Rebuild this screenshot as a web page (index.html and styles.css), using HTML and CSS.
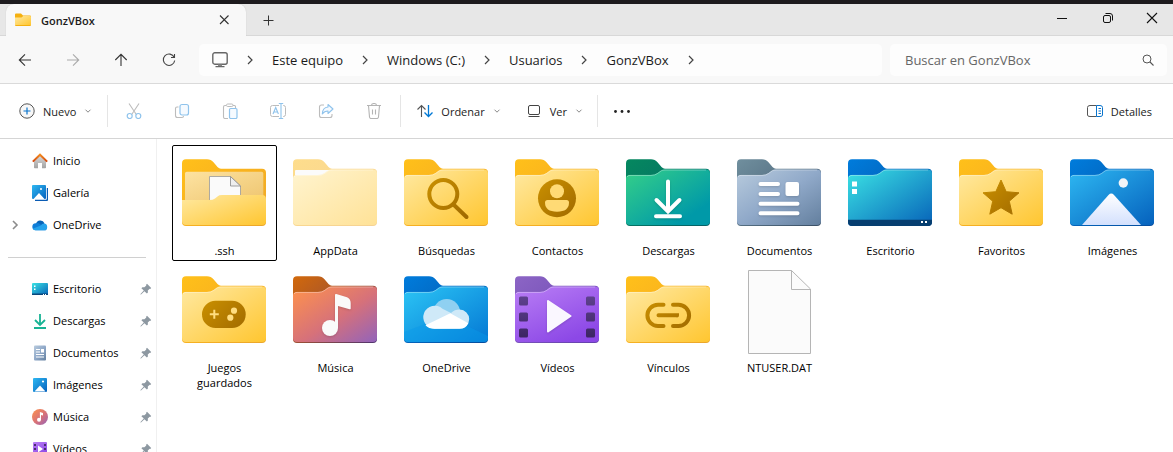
FILE: index.html
```html
<!DOCTYPE html>
<html lang="es">
<head>
<meta charset="utf-8">
<meta name="viewport" content="width=device-width, initial-scale=1">
<title>GonzVBox</title>
<link rel="stylesheet" href="styles.css">
</head>
<body>
<svg class="defs" aria-hidden="true">
  <defs>
    <linearGradient id="y-back" x1="0" y1="0" x2="1" y2="1"><stop offset="0" stop-color="#ffc01a"/><stop offset=".4" stop-color="#fab41e"/><stop offset="1" stop-color="#eba62b"/></linearGradient>
    <linearGradient id="y-front" x1="0" y1="0" x2="1" y2="1"><stop offset="0" stop-color="#ffe9a2"/><stop offset="1" stop-color="#ffc630"/></linearGradient>
    <linearGradient id="y-inner" x1="0" y1="0" x2="1" y2="1"><stop offset="0" stop-color="#fde3a2"/><stop offset="1" stop-color="#eec46e"/></linearGradient>
    <linearGradient id="p-back" x1="0" y1="0" x2="1" y2="1"><stop offset="0" stop-color="#fedd8c"/><stop offset="1" stop-color="#f5d294"/></linearGradient>
    <linearGradient id="p-front" x1="0" y1="0" x2="1" y2="1"><stop offset="0" stop-color="#fff4d0"/><stop offset="1" stop-color="#ffe297"/></linearGradient>
    <linearGradient id="g-back" x1="0" y1="0" x2="1" y2="1"><stop offset="0" stop-color="#05885f"/><stop offset="1" stop-color="#066067"/></linearGradient>
    <linearGradient id="g-front" x1="0" y1="0" x2="1" y2="1"><stop offset="0" stop-color="#35d088"/><stop offset=".8" stop-color="#0099a8"/></linearGradient>
    <linearGradient id="s-back" x1="0" y1="0" x2="1" y2="1"><stop offset="0" stop-color="#708f9e"/><stop offset="1" stop-color="#3a4f66"/></linearGradient>
    <linearGradient id="s-front" x1="0" y1="0" x2="1" y2="1"><stop offset="0" stop-color="#b8cbdd"/><stop offset=".5" stop-color="#90a9c9"/><stop offset="1" stop-color="#637f9e"/></linearGradient>
    <linearGradient id="b-back" x1="0" y1="0" x2="1" y2="1"><stop offset="0" stop-color="#007cdc"/><stop offset="1" stop-color="#064c9c"/></linearGradient>
    <linearGradient id="b-front" x1="0" y1="0" x2="1" y2="1"><stop offset="0" stop-color="#2eb8f2"/><stop offset="1" stop-color="#0561bd"/></linearGradient>
    <linearGradient id="d-front" x1="0" y1="0" x2="1" y2="1"><stop offset="0" stop-color="#3be3e4"/><stop offset="1" stop-color="#0763b9"/></linearGradient>
    <linearGradient id="c-front" x1="0" y1="0" x2="1" y2="1"><stop offset="0" stop-color="#2cc5f5"/><stop offset="1" stop-color="#0478d4"/></linearGradient>
    <linearGradient id="m-back" x1="0" y1="0" x2="1" y2="1"><stop offset="0" stop-color="#d2690b"/><stop offset=".5" stop-color="#9f5132"/><stop offset="1" stop-color="#4f3471"/></linearGradient>
    <linearGradient id="m-front" x1="0" y1="0" x2="1" y2="1"><stop offset="0" stop-color="#ff934b"/><stop offset=".55" stop-color="#d6717a"/><stop offset="1" stop-color="#9263bb"/></linearGradient>
    <linearGradient id="v-back" x1="0" y1="0" x2="1" y2="1"><stop offset="0" stop-color="#8c65c5"/><stop offset="1" stop-color="#6440ad"/></linearGradient>
    <linearGradient id="v-front" x1="0" y1="0" x2=".6" y2="1"><stop offset="0" stop-color="#b97ef5"/><stop offset="1" stop-color="#8c48e6"/></linearGradient>
    <linearGradient id="ochre" gradientUnits="userSpaceOnUse" x1="24" y1="26" x2="62" y2="64"><stop offset="0" stop-color="#ca9000"/><stop offset="1" stop-color="#a06a00"/></linearGradient>
    <linearGradient id="snow" x1="0" y1="0" x2="0" y2="1"><stop offset="0" stop-color="#fff"/><stop offset="1" stop-color="#d3e0fd"/></linearGradient>
    <linearGradient id="reel" gradientUnits="userSpaceOnUse" x1="0" y1="26" x2="0" y2="68"><stop offset="0" stop-color="#5f428f"/><stop offset="1" stop-color="#3c2463"/></linearGradient>
    <linearGradient id="roof" x1="0" y1="0" x2="0" y2="1"><stop offset="0" stop-color="#f28a1e"/><stop offset="1" stop-color="#d4480f"/></linearGradient>
    <linearGradient id="wall" x1="0" y1="0" x2="0" y2="1"><stop offset="0" stop-color="#d8d8d8"/><stop offset="1" stop-color="#a3a3a3"/></linearGradient>
    <path id="back" d="M0 10.300q0-4 4-4h21q4 0 6.500 3l4 4.800q1.600 1.600 3.500 1.600h41q4 0 4 4V69q0 4-4 4H4q-4 0-4-4z"/>
    <path id="front" d="M0 25.500q0-3.500 3.500-3.500H25q3.800 0 6.500-2l3.500-2.500q1.500-1 4-1h41q4 0 4 4V68q0 4-4 4H4q-4 0-4-4z"/>
    <path id="rim" d="M1 24q.8-1.600 3-1.600h21q4 0 6.700-2l3.400-2.500q1.500-.9 4-.9h41" fill="none" stroke="#fff" stroke-opacity=".35"/>
    <g id="yellow"><use href="#back" fill="url(#y-back)"/><use href="#front" fill="url(#y-front)"/><use href="#rim"/></g>
    <symbol id="pin" viewBox="0 0 12 12"><path fill="#8d98a1" d="M7 .8 11.200 5l-.9.900-.6-.2-1.900 1.900.1 2-1 1L4.400 8.200 1 11.500H.5V11l3.300-3.400L1.400 5.200l1-1 2 .1 1.900-1.900-.2-.7z"/></symbol>
    <symbol id="crumb" viewBox="0 0 8 10"><path d="m2 1 4 4-4 4" fill="none" stroke="#444" stroke-width="1.200"/></symbol>
    <symbol id="down" viewBox="0 0 8 8"><path d="m1.500 2.700 2.500 2.500 2.500-2.500" fill="none" stroke="#888"/></symbol>
  </defs>
</svg>

<div class="window">
  <header class="titlebar">
    <div class="tab">
      <svg class="icon" viewBox="0 0 16 16"><path fill="#f5b00f" d="M0 2.500q0-1 1-1h5l2 2h7q1 0 1 1V13q0 1-1 1H1q-1 0-1-1z"/><path fill="url(#y-front)" d="M0 5.500h6.500L8.300 4H15q1 0 1 1v8H0z"/></svg>
      <span class="tab-title">GonzVBox</span>
      <button class="plain" aria-label="Cerrar pestaña"><svg class="icon" viewBox="0 0 16 16"><path d="m4 3.500 8.500 8.500m0-8.500L4 12" stroke="#333" stroke-width="1.100"/></svg></button>
    </div>
    <button class="plain new-tab" aria-label="Nueva pestaña"><svg class="icon" viewBox="0 0 16 16"><path d="M8.500 3.500v10M3.500 8.500h10" stroke="#333"/></svg></button>
    <div class="controls">
      <button class="plain" aria-label="Minimizar"><svg class="icon" viewBox="0 0 16 16"><path d="M3 8.500h10" stroke="#111"/></svg></button>
      <button class="plain" aria-label="Restaurar"><svg class="icon" viewBox="0 0 16 16" fill="none" stroke="#111"><rect x="3.500" y="5.500" width="7" height="7" rx="1.500"/><path d="M5.500 3.500H10q2.500 0 2.500 2.500v4.500"/></svg></button>
      <button class="plain" aria-label="Cerrar"><svg class="icon" viewBox="0 0 16 16"><path d="m3 3 10 10M13 3 3 13" stroke="#111" stroke-width="1.100"/></svg></button>
    </div>
  </header>

  <div class="navbar">
    <div class="history">
      <button class="plain" aria-label="Atrás"><svg class="icon" viewBox="0 0 16 16"><path d="M14 8H2.500M8 2.300 2.300 8 8 13.700" fill="none" stroke="#333" stroke-width="1.100"/></svg></button>
      <button class="plain" aria-label="Adelante" disabled><svg class="icon" viewBox="0 0 16 16"><path d="M2 8h11.500M8 2.300 13.700 8 8 13.700" fill="none" stroke="#aaa" stroke-width="1.100"/></svg></button>
      <button class="plain" aria-label="Subir"><svg class="icon" viewBox="0 0 16 16"><path d="M8 14V2.500M2.300 8 8 2.300 13.700 8" fill="none" stroke="#333" stroke-width="1.100"/></svg></button>
      <button class="plain" aria-label="Actualizar"><svg class="icon" viewBox="0 0 16 16"><path d="M13.200 5.300A5.700 5.700 0 1 0 13.700 8.500M13.500 2v3.500H10" fill="none" stroke="#444" stroke-width="1.100"/></svg></button>
    </div>
    <nav class="address" aria-label="Ruta">
      <svg class="icon" viewBox="0 0 16 16"><rect x=".8" y=".8" width="14.400" height="11.400" rx="2" fill="none" stroke="#666" stroke-width="1.400"/><path d="M6 12.500h4v2H6z" fill="#888"/><path d="M3.500 14.600h9" stroke="#666" stroke-width="1.200"/></svg>
      <svg class="crumb"><use href="#crumb"/></svg>
      <a href="#">Este equipo</a>
      <svg class="crumb"><use href="#crumb"/></svg>
      <a href="#">Windows (C:)</a>
      <svg class="crumb"><use href="#crumb"/></svg>
      <a href="#">Usuarios</a>
      <svg class="crumb"><use href="#crumb"/></svg>
      <a href="#">GonzVBox</a>
      <svg class="crumb"><use href="#crumb"/></svg>
    </nav>
    <label class="search">
      <input type="search" placeholder="Buscar en GonzVBox" aria-label="Buscar en GonzVBox">
      <svg class="icon" viewBox="0 0 16 16"><circle cx="7" cy="7" r="4" fill="none" stroke="#555"/><path d="m10 10 3.500 3.500" stroke="#555" stroke-width="1.100"/></svg>
    </label>
  </div>

  <div class="toolbar">
    <button class="command"><svg class="icon" viewBox="0 0 16 16"><circle cx="8" cy="8" r="7.200" fill="#f7f7f7" stroke="#555"/><path d="M8 4.500v7M4.500 8h7" stroke="#0a74cc" stroke-width="1.200"/></svg><span>Nuevo</span><svg class="down"><use href="#down"/></svg></button>
    <div class="edit">
      <button class="plain" aria-label="Cortar" disabled><svg class="icon" viewBox="0 0 16 16" fill="none"><path d="m3 .5 7.300 11M13 .5l-7.300 11" stroke="#bcbcbc" stroke-width="1.100"/><circle cx="3.700" cy="13" r="2.500" stroke="#8fc3ec" stroke-width="1.200"/><circle cx="12.300" cy="13" r="2.500" stroke="#8fc3ec" stroke-width="1.200"/></svg></button>
      <button class="plain" aria-label="Copiar" disabled><svg class="icon" viewBox="0 0 16 16" fill="none"><path d="M4.500 4H3Q1.500 4 1.500 5.500v7q0 2 2 2H8q1.500 0 1.500-1.500" stroke="#bcbcbc" stroke-width="1.100"/><rect x="6" y="1.500" width="8.500" height="10.500" rx="2" fill="#f5faff" stroke="#8fc3ec" stroke-width="1.200"/></svg></button>
      <button class="plain" aria-label="Pegar" disabled><svg class="icon" viewBox="0 0 16 16" fill="none"><path d="M4 2.500H3Q1.500 2.500 1.500 4v10q0 1.500 1.500 1.500h3M11 2.500h1.500q1 0 1 1V5" stroke="#bcbcbc" stroke-width="1.100"/><rect x="4.500" y="1" width="6.500" height="2.500" rx="1.200" stroke="#bcbcbc"/><rect x="7.500" y="5.500" width="7.500" height="10" rx="1.200" fill="#f5faff" stroke="#8fc3ec" stroke-width="1.200"/></svg></button>
      <button class="plain" aria-label="Cambiar nombre" disabled><svg class="icon" viewBox="0 0 16 16" fill="none"><path d="M9 2.500H2.500q-2 0-2 2v7q0 2 2 2H9m4-11h.5q2 0 2 2v7q0 2-2 2H13" stroke="#bcbcbc"/><path d="m3 11 2.700-6.500L8.400 11M4 9h3.500M8.800.5h4.400m-4.400 15h4.400M11 .5v15" stroke="#8fc3ec" stroke-width="1.100"/></svg></button>
      <button class="plain" aria-label="Compartir" disabled><svg class="icon" viewBox="0 0 16 16" fill="none"><path d="M6 2H3.500q-2 0-2 2v8.500q0 2 2 2H12q2 0 2-2V11" stroke="#bcbcbc" stroke-width="1.100"/><path d="M10 1.500 15 6l-5 4.500V8q-3.700 0-5.700 3Q4.500 4.500 10 4z" fill="#f5faff" stroke="#8fc3ec" stroke-width="1.100" stroke-linejoin="round"/></svg></button>
      <button class="plain" aria-label="Eliminar" disabled><svg class="icon" viewBox="0 0 16 16" fill="none"><path d="M1 2.500h14M2.500 2.500l1 11.500q.2 1.500 1.500 1.500h6q1.300 0 1.500-1.500l1-11.500M5.500 2.500q0-2 2.500-2t2.500 2M6.500 6.500v5m3-5v5" stroke="#b4b4b4" stroke-width="1.100"/></svg></button>
    </div>
    <div class="arrange">
      <button class="command"><svg class="icon" viewBox="0 0 16 16" fill="none"><path d="M4.500 14V2.500M.5 6.500l4-4 4 4" stroke="#555" stroke-width="1.100"/><path d="M11.500 2v11.500m-4-4 4 4 4-4" stroke="#0078d4" stroke-width="1.300"/></svg><span>Ordenar</span><svg class="down"><use href="#down"/></svg></button>
      <button class="command"><svg class="icon" viewBox="0 0 16 16" fill="none" stroke="#444"><rect x="2.500" y="2.500" width="11" height="9" rx="1.500"/><path d="M2.500 13.500h11"/></svg><span>Ver</span><svg class="down"><use href="#down"/></svg></button>
    </div>
    <button class="plain more" aria-label="Ver más"><svg class="icon" viewBox="0 0 16 16" fill="#222"><circle cx="1.500" cy="8.500" r="1.400"/><circle cx="8" cy="8.500" r="1.400"/><circle cx="14.500" cy="8.500" r="1.400"/></svg></button>
    <button class="command details"><svg class="icon" viewBox="0 0 16 16" fill="none"><path d="M9.500 2.500H3q-2.500 0-2.500 2v7.500q0 1.500 2.500 1.500h6.500" stroke="#555"/><path d="M9.500 2.500H13q2.500 0 2.500 2V12q0 1.500-2.500 1.500H9.500zM11.500 5.500h2.500M11.500 8h2.500M11.500 10.500h2.500" stroke="#0a74cc"/></svg><span>Detalles</span></button>
  </div>

  <div class="content">
    <nav class="sidebar" aria-label="Panel de navegación">
      <a href="#"><svg class="icon" viewBox="0 0 16 16"><path fill="url(#wall)" d="M2 8 8 2.500 14 8v6.500q0 .8-.8.800H10V10H6v5.300H2.800q-.8 0-.8-.8z"/><path d="M.8 8.600 8 1.700l7.200 6.900" fill="none" stroke="url(#roof)" stroke-width="2"/></svg><span>Inicio</span></a>
      <a href="#"><svg class="icon" viewBox="0 0 16 16"><path d="M3 15.500h11q1.500 0 1.500-1.500V3" fill="none" stroke="#0a5cb4" stroke-width="1.400"/><rect width="14" height="14" rx="1" fill="url(#b-front)"/><path d="M1.500 14 7 8l5.500 6z" fill="#fff"/><circle cx="9" cy="4" r="1" fill="#fff"/></svg><span>Galería</span></a>
      <a class="expandable" href="#"><svg class="crumb expand"><path d="m2 1 4 4-4 4" fill="none" stroke="#8c8c8c" stroke-width="1.600"/></svg><svg class="icon" viewBox="0 0 16 16"><path d="M4 7a4.500 4.500 0 0 1 8.500-.7L9.500 11z" fill="#0864b8"/><path d="M4.200 6.200q2-.4 4 1L15 11l-1 2.200H3.500A3.500 3.500 0 0 1 4.200 6.200z" fill="#0f7ed8"/><path d="M12 6.600a3.400 3.400 0 0 1 .6 6.700H3.500q-1.800 0-2.800-1.500l8-3.200q1.300-1.800 3.300-2z" fill="#25a3ec"/></svg><span>OneDrive</span></a>
      <hr>
      <a href="#"><svg class="icon" viewBox="0 0 16 16"><rect y="2" width="16" height="12" rx="1" fill="url(#d-front)"/><path d="M0 12.500h16V14H0z" fill="#0b467b"/><path d="M2 4.500h1.500V6H2zM2 7.500h1.500V9H2zM11 13h1v1h-1zM13 13h1v1h-1z" fill="#fff"/></svg><span>Escritorio</span><svg class="pin"><use href="#pin"/></svg></a>
      <a href="#"><svg class="icon" viewBox="0 0 16 16"><path d="M8 1v11M3 7l5 5 5-5M2 15h12" fill="none" stroke="#18b394" stroke-width="1.800"/></svg><span>Descargas</span><svg class="pin"><use href="#pin"/></svg></a>
      <a href="#"><svg class="icon" viewBox="0 0 16 16"><rect x="2" y=".5" width="12" height="15" rx="1" fill="url(#s-front)"/><path d="M4 4.500h4M4 7h4M4 9.500h8M4 12h8" stroke="#fff"/><path d="M9 4h3v3.500H9z" fill="#fff"/></svg><span>Documentos</span><svg class="pin"><use href="#pin"/></svg></a>
      <a href="#"><svg class="icon" viewBox="0 0 16 16"><rect x="1" y="1" width="14" height="14" rx="1" fill="url(#b-front)"/><path d="M2.500 14.500 8 8.500l5.500 6z" fill="#fff"/><circle cx="11" cy="4.500" r="1.100" fill="#fff"/></svg><span>Imágenes</span><svg class="pin"><use href="#pin"/></svg></a>
      <a href="#"><svg class="icon" viewBox="0 0 16 16"><circle cx="8" cy="8" r="8" fill="url(#m-front)"/><circle cx="7" cy="10.800" r="2" fill="#fff"/><path d="M7.900 3 11 4v2.500L9 6v5H7.900z" fill="#fff"/></svg><span>Música</span><svg class="pin"><use href="#pin"/></svg></a>
      <a href="#"><svg class="icon" viewBox="0 0 16 16"><rect x="1" y="1" width="14" height="14" rx="1" fill="url(#v-front)"/><path d="M2 3h2v2H2zM2 7h2v2H2zM2 11h2v2H2zM12 3h2v2h-2zM12 7h2v2h-2zM12 11h2v2h-2z" fill="#48306f"/><path d="M6 4.500 11 8l-5 3.500z" fill="#fff"/></svg><span>Vídeos</span><svg class="pin"><use href="#pin"/></svg></a>
    </nav>

    <main class="files">
      <button class="file focused"><svg viewBox="0 0 84 84"><use href="#back" fill="url(#y-back)"/><path d="M3 20.500q0-1.800 1.800-1.800h74.700q1.800 0 1.800 1.800V50H3z" fill="url(#y-inner)"/><path d="M27.500 23.500h21l10 9.500v17h-31z" fill="#fafafa" stroke="#999" stroke-width=".8"/><path d="M48.500 23.500V33h10z" fill="#eee" stroke="#888" stroke-width=".8"/><path d="M0 47h27q4 0 6-1.600l2.500-2Q37 42 40 42h40q4 0 4 4v22q0 4-4 4H4q-4 0-4-4z" fill="url(#y-front)"/></svg><span>.ssh</span></button>
      <button class="file"><svg viewBox="0 0 84 84"><use href="#back" fill="url(#p-back)"/><path d="M2 18q0-1 1-1h34l-6 5H2z" fill="#fbfbfb"/><use href="#front" fill="url(#p-front)"/><use href="#rim"/></svg><span>AppData</span></button>
      <button class="file"><svg viewBox="0 0 84 84"><use href="#yellow"/><g fill="none" stroke="url(#ochre)" stroke-width="4"><circle cx="39.300" cy="41" r="14"/><path d="m50 52 12.500 12" stroke-linecap="round"/></g></svg><span>Búsquedas</span></button>
      <button class="file"><svg viewBox="0 0 84 84"><use href="#yellow"/><circle cx="42" cy="45.300" r="19" fill="url(#ochre)"/><g fill="#ffda75"><circle cx="42" cy="38.300" r="7"/><path d="M32.500 47h19q2.500 0 2.500 2.500 0 9.200-12 9.200t-12-9.200q0-2.500 2.500-2.500z"/></g></svg><span>Contactos</span></button>
      <button class="file"><svg viewBox="0 0 84 84"><use href="#back" fill="url(#g-back)"/><use href="#front" fill="url(#g-front)"/><use href="#rim"/><path class="raised" d="M42 28.500V58M30.500 47 42 58.500 53.500 47M30 63.300h24" fill="none" stroke="#fff" stroke-width="4" stroke-linecap="round"/></svg><span>Descargas</span></button>
      <button class="file"><svg viewBox="0 0 84 84"><use href="#back" fill="url(#s-back)"/><use href="#front" fill="url(#s-front)"/><use href="#rim"/><g class="raised"><path d="M23.500 31h17.500M23.500 41h17.500M23.500 50.700H60.500M23.500 60.300H60.500" stroke="#fff" stroke-width="4" stroke-linecap="round"/><rect x="48.500" y="29" width="13.500" height="14" rx="2" fill="#fff"/></g></svg><span>Documentos</span></button>
      <button class="file"><svg viewBox="0 0 84 84"><use href="#back" fill="url(#b-back)"/><use href="#front" fill="url(#d-front)"/><use href="#rim"/><path d="M0 66.700h84V69q0 4-4 4H4q-4 0-4-4z" fill="#063e70"/><path d="M4 28.500h5v5H4zM4 36h5v5H4zM73 68h2v2h-2zM77 68h2v2h-2z" fill="#fff"/></svg><span>Escritorio</span></button>
      <button class="file"><svg viewBox="0 0 84 84"><use href="#yellow"/><path d="m42 27 5.200 11.700 12.800 1.100-9.700 8.400 2.900 13L42 54.700l-11.200 6.500 2.900-13-9.700-8.400 12.800-1.100z" fill="url(#ochre)" stroke="url(#ochre)" stroke-linejoin="round"/></svg><span>Favoritos</span></button>
      <button class="file"><svg viewBox="0 0 84 84"><use href="#back" fill="url(#b-back)"/><use href="#front" fill="url(#b-front)"/><use href="#rim"/><path d="m12 72 26.500-30q2.800-2.800 5.500 0L71 72z" fill="url(#snow)"/><circle cx="53.300" cy="30" r="4.700" fill="#f1f4f7"/></svg><span>Imágenes</span></button>
      <button class="file"><svg viewBox="0 0 84 84"><use href="#yellow"/><rect x="20" y="30.700" width="43.700" height="27.300" rx="13.600" fill="url(#ochre)"/><path d="M32.300 39.800v9M27.800 44.300h9" stroke="#ffdd80" stroke-width="2"/><g fill="#ffdd80"><circle cx="52" cy="40.700" r="3.100"/><circle cx="48.300" cy="47.700" r="3.100"/></g></svg><span>Juegos guardados</span></button>
      <button class="file"><svg viewBox="0 0 84 84"><use href="#back" fill="url(#m-back)"/><use href="#front" fill="url(#m-front)"/><use href="#rim"/><g class="raised" fill="#fafafa"><circle cx="37" cy="58" r="8"/><path d="M42 25q0-1.300 1.300-1L54 27.200q3.700 1.800 3.700 5.800v5.500q0 1-1 .7L45 36v22h-3z"/></g></svg><span>Música</span></button>
      <button class="file"><svg viewBox="0 0 84 84"><use href="#back" fill="url(#b-back)"/><use href="#front" fill="url(#c-front)"/><path d="M0 62 42 46l42 20v2q0 4-4 4H4q-4 0-4-4z" fill="#0999e8" fill-opacity=".45"/><use href="#rim"/><circle cx="42.700" cy="42.500" r="13.500" fill="#8fd0f1"/><path d="M30.500 58.700a11.500 11.500 0 1 1 8-20L47 43q3.500-3.400 8.700-3.400a9.500 9.500 0 0 1 0 19z" fill="#cfe9f8"/><path d="m21.500 55.200 24.800-12 18 10q-2.600 5.500-8.600 5.500H30.500q-6 0-9-3.500z" fill="#fff"/></svg><span>OneDrive</span></button>
      <button class="file"><svg viewBox="0 0 84 84"><use href="#back" fill="url(#v-back)"/><use href="#front" fill="url(#v-front)"/><use href="#rim"/><g fill="url(#reel)"><rect x="4" y="26.500" width="9" height="9" rx="1.500"/><rect x="4" y="42.500" width="9" height="9" rx="1.500"/><rect x="4" y="58.500" width="9" height="9" rx="1.500"/><rect x="71" y="26.500" width="9" height="9" rx="1.500"/><rect x="71" y="42.500" width="9" height="9" rx="1.500"/><rect x="71" y="58.500" width="9" height="9" rx="1.500"/></g><path class="raised" d="M33 31v30.500L55.500 46z" fill="#faf7ff" stroke="#faf7ff" stroke-width="2" stroke-linejoin="round"/></svg><span>Vídeos</span></button>
      <button class="file"><svg viewBox="0 0 84 84"><use href="#yellow"/><path d="M37.500 34.700H32a10.600 10.600 0 0 0 0 21.200h5.500M47 34.700h5.500a10.600 10.600 0 0 1 0 21.200H47M32.500 45.300h18.500L51 45.400" fill="none" stroke="url(#ochre)" stroke-width="4" stroke-linecap="round"/></svg><span>Vínculos</span></button>
      <button class="file"><svg viewBox="0 0 84 84"><path d="M11.500.5h43L73.500 19v64.500h-62z" fill="#fbfbfb" stroke="#b5b5b5"/><path d="M54.500.5V19.500h19" fill="none" stroke="#b5b5b5"/></svg><span>NTUSER.DAT</span></button>
    </main>
  </div>
</div>
</body>
</html>
```
FILE: styles.css
```css
* {
  box-sizing: border-box;
}

body {
  margin: 0;
  font: 11px/16px "Open Sans", "Noto Sans", sans-serif;
  color: #1b1b1b;
  background: #fff;
}

button,
input {
  margin: 0;
  padding: 0;
  border: 0;
  background: none;
  font: inherit;
  color: inherit;
}

a {
  color: inherit;
  text-decoration: none;
}

svg {
  display: block;
  flex: none;
}

.defs {
  position: absolute;
  width: 0;
  height: 0;
}

.icon {
  width: 16px;
  height: 16px;
}

.crumb {
  width: 8px;
  height: 10px;
}

.down {
  width: 8px;
  height: 8px;
}

.window {
  display: flex;
  flex-direction: column;
  height: 100vh;
  overflow: hidden;
  border-top: 4px solid #1d1b1e;
}

.titlebar {
  display: flex;
  flex: none;
  align-items: stretch;
  height: 32px;
  padding-left: 6px;
  background: #e7e7e7;
  box-shadow: inset 0 -1px #d8d8d8;
}

.tab {
  display: flex;
  align-items: center;
  gap: 10px;
  width: 240px;
  padding: 0 14px 0 9px;
  border-radius: 8px 8px 0 0;
  background: #f8f8f8;
  box-shadow: 0 0 1px #bbb;
  clip-path: inset(-2px -2px 0 -2px);
}

.tab-title {
  flex: 1;
  padding-top: 1px;
  font-weight: 600;
}

.plain {
  display: flex;
  align-items: center;
  justify-content: center;
}

.new-tab {
  padding: 0 14px;
}

.controls {
  display: flex;
  margin-left: auto;
  padding-bottom: 4px;
}

.controls .plain {
  width: 46px;
}

.controls .plain:last-child {
  width: 42px;
}

.navbar {
  display: flex;
  flex: none;
  align-items: center;
  gap: 6px;
  height: 48px;
  padding: 0 6px 0 1px;
  border-bottom: 1px solid #dadada;
  background: #f8f8f8;
}

.history {
  display: flex;
  flex: none;
}

.history .plain {
  width: 48px;
  height: 32px;
}

.address,
.search {
  display: flex;
  align-items: center;
  height: 32px;
  border-radius: 5px;
  background: #fdfdfd;
  font-size: 13px;
}

.address {
  flex: 1;
  gap: 18px;
  padding: 0 13px;
  overflow: hidden;
  white-space: nowrap;
}

.search {
  flex: 0 1 277px;
  margin-left: 2px;
  padding: 0 11px 0 15px;
}

.search input {
  flex: 1;
  min-width: 0;
  outline: 0;
}

.search input::placeholder {
  color: #666;
  opacity: 1;
}

.toolbar {
  display: flex;
  flex: none;
  align-items: center;
  height: 55px;
  padding: 0 21px 0 19px;
  border-bottom: 1px solid #d5d5d5;
}

.command {
  display: flex;
  align-items: center;
  gap: 8px;
}

.command span {
  padding-top: 1px;
}

.edit,
.arrange {
  display: flex;
  height: 32px;
  border: solid #e5e5e5;
  border-width: 0 1px;
}

.edit {
  margin-left: 15px;
  padding: 0 2px;
}

.edit .plain {
  width: 48px;
}

.arrange {
  gap: 25px;
  margin-left: -1px;
  padding: 0 14px 0 16px;
}

.more {
  margin-left: 16px;
}

.details {
  margin-left: auto;
}

.content {
  display: flex;
  flex: 1;
  min-height: 0;
  color: #000;
}

.sidebar {
  flex: none;
  width: 157px;
  padding-top: 6px;
  border-right: 1px solid #f0f0f0;
  overflow: hidden;
}

.sidebar a {
  display: flex;
  align-items: center;
  gap: 5px;
  height: 32px;
  padding: 0 4px 0 32px;
}

.sidebar .expandable {
  padding-left: 11px;
}

.expand {
  margin-right: 8px;
}

.pin {
  width: 12px;
  height: 12px;
  margin-left: auto;
}

.sidebar hr {
  height: 1px;
  margin: 16px 10px 15px 8px;
  border: 0;
  background: #d0d0d0;
}

.files {
  display: grid;
  flex: 1;
  grid-template-columns: repeat(auto-fill, 105px);
  align-content: start;
  gap: 1px 6px;
  padding: 6px 0 0 15px;
  overflow: hidden;
}

.file {
  display: flex;
  flex-direction: column;
  align-items: center;
  justify-content: flex-start;
  gap: 6px;
  padding: 7px 14px 2px;
  border: 1px solid transparent;
  border-radius: 2px;
  line-height: 15px;
  text-align: center;
}

.file svg {
  width: 84px;
  height: 84px;
  margin-right: 1px;
}

.file.focused {
  border-color: #000;
}

.raised {
  filter: drop-shadow(0 1px 1px rgb(0 0 0 / 15%));
}
```
